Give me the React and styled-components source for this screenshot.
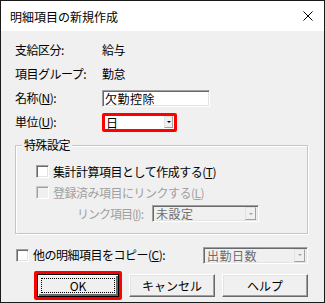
import styled, { createGlobalStyle } from "styled-components";

const Global = createGlobalStyle`
  html, body { margin: 0; padding: 0; background: #fff; }
  * { box-sizing: border-box; }
`;

const Window = styled.div`
  width: 325px;
  height: 303px;
  border: 1px solid #1a1a1a;
  background: #f0f0f0;
  display: flex;
  flex-direction: column;
  font-family: "Noto Sans CJK JP", "Noto Sans", sans-serif;
  font-size: 12px;
  color: #000;
  overflow: hidden;
`;

const TitleBar = styled.div`
  height: 30px;
  flex: none;
  background: #fff;
  display: flex;
  align-items: center;
  justify-content: space-between;
  padding: 0 11px 0 9px;
`;

const Body = styled.div`
  flex: 1;
  display: flex;
  flex-direction: column;
  padding: 7px 16px 0 14px;
  letter-spacing: -0.5px;
`;

const InfoGrid = styled.div`
  display: grid;
  grid-template-columns: 87px auto;
  grid-auto-rows: 24px;
  align-items: center;
`;

const Label = styled.span`
  white-space: nowrap;
  line-height: 16px;
  flex: none;
  color: ${(p) => (p.disabled ? "#a0a0a0" : "#000")};
`;

const Sunken = styled.div`
  border: 1px solid;
  border-color: #a0a0a0 #fff #fff #a0a0a0;
  box-shadow: inset 1px 1px 0 #696969, inset -1px -1px 0 #e3e3e3;
`;

const TextBox = styled(Sunken)`
  width: 108px;
  height: 17px;
  background: #fff;
  padding: 0 2px;
  line-height: 15px;
  letter-spacing: 0.5px;
`;

const Combo = styled(Sunken)`
  width: ${(p) => p.w}px;
  height: 17px;
  flex: none;
  background: #f0f0f0;
  color: #6d6d6d;
  display: flex;
  align-items: center;
  justify-content: space-between;
  padding: 2px 2px 2px 3px;
  line-height: 13px;
  letter-spacing: 0.5px;
`;

const MarkedCombo = styled.div`
  width: 75px;
  height: 19px;
  border: 3px solid #ff0000;
  border-radius: 2px;
  background: #fff;
  display: flex;
  align-items: center;
  justify-content: space-between;
  padding: 0 1px 0 1px;
  line-height: 13px;
`;

const DropButton = styled.span`
  width: ${(p) => (p.small ? 9 : 11)}px;
  height: ${(p) => (p.small ? 12 : 13)}px;
  background: #f0f0f0;
  border: 1px solid;
  border-color: #e3e3e3 #a0a0a0 #a0a0a0 #e3e3e3;
  display: flex;
  align-items: center;
  justify-content: center;
  &::after {
    content: "";
    border-left: 2px solid transparent;
    border-right: 2px solid transparent;
    border-top: 2px solid ${(p) => (p.disabled ? "#a0a0a0" : "#000")};
  }
`;

const GroupBox = styled.div`
  position: relative;
  margin-top: 11px;
  height: 89px;
  padding: 15px 0 0 20px;
  border: 1px solid #c6c6c6;
  box-shadow: inset 1px 1px 0 #fff, 1px 1px 0 #fff;
`;

const GroupTitle = styled.span`
  position: absolute;
  top: -9px;
  left: 6px;
  padding: 0 2px;
  line-height: 16px;
  background: #f0f0f0;
`;

const CheckRow = styled.div`
  display: flex;
  align-items: center;
  gap: 4px;
  height: 21px;
`;

const Check = styled(Sunken)`
  width: 13px;
  height: 13px;
  flex: none;
  background: ${(p) => (p.disabled ? "#f0f0f0" : "#fff")};
  ${(p) =>
    p.disabled &&
    `border-color: #c8c8c8 #fff #fff #c8c8c8; box-shadow: inset 1px 1px 0 #a0a0a0, inset -1px -1px 0 #f0f0f0;`}
`;

const LinkRow = styled.div`
  display: flex;
  align-items: center;
  height: 21px;
  padding-left: 41px;
`;

const LinkLabel = styled(Label)`
  width: 75px;
  letter-spacing: -1px;
`;

const CopyRow = styled.div`
  margin-top: 10px;
  height: 22px;
  display: flex;
  align-items: center;
  justify-content: space-between;
  padding-left: 1px;
`;

const Buttons = styled.div`
  margin-top: 5px;
  display: flex;
  align-items: center;
  justify-content: flex-end;
  gap: 7px;
  letter-spacing: 0;
`;

const Button = styled.button`
  width: ${(p) => (p.$default ? 82 : 86)}px;
  height: 23px;
  background: #f0f0f0;
  font: inherit;
  color: #000;
  padding: 0;
  border: 1px solid;
  border-color: #fff #696969 #696969 #fff;
  box-shadow: inset -1px -1px 0 #a0a0a0, inset 1px 1px 0 #e3e3e3;
  display: flex;
  align-items: center;
  justify-content: center;
  ${(p) =>
    p.$default &&
    `
    border: 1px solid #000;
    box-shadow: inset 1px 1px 0 #fff, inset -2px -2px 0 #696969;
    padding: 3px;
  `}
`;

const FocusRect = styled.span`
  flex: 1;
  align-self: stretch;
  border: 1px dotted #000;
  display: flex;
  align-items: center;
  justify-content: center;
`;

const Marked = styled.div`
  border: 3px solid #ff0000;
  border-radius: 2px;
`;

const Close = () => (
  <svg width="10" height="10" viewBox="0 0 10 10">
    <path d="M0.5 0.5 L9.5 9.5 M9.5 0.5 L0.5 9.5" stroke="#000" strokeWidth="1" />
  </svg>
);

export default function App() {
  return (
    <>
      <Global />
      <Window>
        <TitleBar>
          <span>明細項目の新規作成</span>
          <Close />
        </TitleBar>
        <Body>
          <InfoGrid>
            <Label>支給区分:</Label>
            <Label>給与</Label>
            <Label>項目グループ:</Label>
            <Label>勤怠</Label>
            <Label>
              名称(<u>N</u>):
            </Label>
            <TextBox>欠勤控除</TextBox>
            <Label>
              単位(<u>U</u>):
            </Label>
            <MarkedCombo>
              <span>日</span>
              <DropButton small />
            </MarkedCombo>
          </InfoGrid>

          <GroupBox>
            <GroupTitle>特殊設定</GroupTitle>
            <CheckRow>
              <Check />
              <Label>
                集計計算項目として作成する(<u>T</u>)
              </Label>
            </CheckRow>
            <CheckRow>
              <Check disabled />
              <Label disabled>
                登録済み項目にリンクする(<u>L</u>)
              </Label>
            </CheckRow>
            <LinkRow>
              <LinkLabel disabled>
                リンク項目(<u>I</u>):
              </LinkLabel>
              <Combo w={107}>
                <span>未設定</span>
                <DropButton disabled />
              </Combo>
            </LinkRow>
          </GroupBox>

          <CopyRow>
            <CheckRow>
              <Check />
              <Label>
                他の明細項目をコピー(<u>C</u>):
              </Label>
            </CheckRow>
            <Combo w={105}>
              <span>出勤日数</span>
              <DropButton disabled />
            </Combo>
          </CopyRow>

          <Buttons>
            <Marked>
              <Button $default>
                <FocusRect>OK</FocusRect>
              </Button>
            </Marked>
            <Button>キャンセル</Button>
            <Button>ヘルプ</Button>
          </Buttons>
        </Body>
      </Window>
    </>
  );
}
